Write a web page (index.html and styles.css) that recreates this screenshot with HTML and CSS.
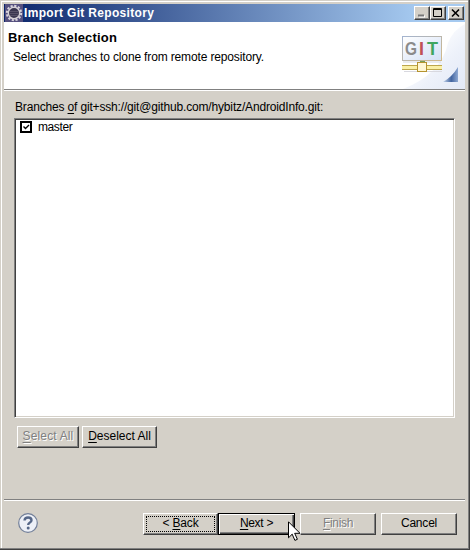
FILE: index.html
```
<!DOCTYPE html>
<html lang="en">
<head>
<meta charset="utf-8">
<title>Import Git Repository</title>
<link rel="stylesheet" href="styles.css">
</head>
<body>
<div class="window">
  <header class="titlebar">
    <svg class="app-icon" width="18" height="18" viewBox="0 0 18 18">
      <rect width="18" height="18" fill="#55507f"/>
      <circle cx="9" cy="9" r="7.2" fill="none" stroke="#d8d4dc" stroke-width="2" stroke-dasharray="2.2 1.57"/>
      <circle cx="9" cy="9" r="5.7" fill="#3a3650" stroke="#d5d0d6" stroke-width="1.4"/>
      <path d="M5 7.5h8M4.500 9.500h9M5 11.500h8" stroke="#575168"/>
    </svg>
    <span class="title">Import Git Repository</span>
    <div class="controls">
      <span class="control"><svg width="14" height="12"><path d="M4 9.500h6" stroke="#fff" stroke-width="2"/><path d="M3 8.500h6" stroke="#777" stroke-width="2"/></svg></span>
      <span class="control"><svg width="14" height="12"><path d="M2.500 1.500h8v8h-8zM2 2.500h9" fill="none" stroke="#000"/></svg></span>
      <span class="control close"><svg width="14" height="12"><path d="M3 2.500l7 7M10 2.500l-7 7" stroke="#000" stroke-width="1.600"/></svg></span>
    </div>
  </header>
  <section class="banner">
    <div class="banner-text">
      <h1 class="heading">Branch Selection</h1>
      <p class="description">Select branches to clone from remote repository.</p>
    </div>
    <svg class="banner-art" width="75" height="67" viewBox="390 22 75 67">
      <defs>
        <linearGradient id="sky" x1="0" y1="0" x2="1" y2="1"><stop offset=".3" stop-color="#fff"/><stop offset=".65" stop-color="#edf1fa"/><stop offset="1" stop-color="#e3e9f6"/></linearGradient>
        <linearGradient id="paper" x1="0" y1="0" x2="1" y2="1"><stop stop-color="#fff"/><stop offset="1" stop-color="#d3e0f6"/></linearGradient>
        <linearGradient id="frame" x1="0" y1="0" x2="1" y2="1"><stop stop-color="#a3b4d0"/><stop offset="1" stop-color="#d2b886"/></linearGradient>
        <linearGradient id="corner" x1="0" y1="0" x2="1" y2="0"><stop stop-color="#c8d8ee"/><stop offset=".55" stop-color="#42649f"/><stop offset="1" stop-color="#8fa9d2"/></linearGradient>
      </defs>
      <path d="M465 24v65h-62q38-15 45-46 5-13 17-19" fill="url(#sky)"/>
      <rect x="402.500" y="36.500" width="39" height="24" fill="url(#paper)" stroke="url(#frame)"/>
      <path d="M403 62h38" stroke="#d5d7dc"/>
      <g class="git"><text x="405" y="55" fill="#8b8b8b" textLength="12" lengthAdjust="spacingAndGlyphs">G</text><text x="419" y="55" fill="#c05058">I</text><text x="427" y="55" fill="#3fa660" textLength="11" lengthAdjust="spacingAndGlyphs">T</text></g>
      <path d="M402 65.500h40M402 69.500h40" stroke="#bda64c"/><path d="M402 67.500h40" stroke="#faf0a6" stroke-width="3"/>
      <path d="M404 71.500h38" stroke="#d8d8df"/>
      <rect x="417.500" y="62.500" width="9" height="9" fill="#fff7d5" stroke="#b5932f"/><path d="M420 61.500h5" stroke="#76a05a"/>
      <path d="M458 67v15h-15q9-5 15-15" fill="url(#corner)"/>
    </svg>
  </section>
  <main class="content">
    <label class="list-label">Branches <u>o</u>f git+ssh://git@github.com/hybitz/AndroidInfo.git:</label>
    <div class="list">
      <div class="row"><svg class="check" width="12" height="12"><rect x="1" y="1" width="10" height="10" fill="#fff" stroke="#000" stroke-width="2"/><path d="M3.500 5.500l2 2 3.500-3.500" fill="none" stroke="#000" stroke-width="1.400"/></svg><span class="item">master</span></div>
    </div>
    <div class="selection">
      <button class="button select disabled"><span><u>S</u>elect All</span></button>
      <button class="button deselect"><span><u>D</u>eselect All</span></button>
    </div>
  </main>
  <footer class="footer">
    <svg class="help" width="20" height="20" viewBox="0 0 20 20"><circle cx="10" cy="10" r="9.300" fill="#edf0f7" stroke="#727f99" stroke-width="1.200"/><path d="M6.500 7.500q.3-3 3.600-3 3.400 0 3.400 2.700 0 1.500-1.900 2.500-1.400.8-1.400 2.300" fill="none" stroke="#566788" stroke-width="2.400"/><circle cx="10.200" cy="15" r="1.500" fill="#566788"/></svg>
    <button class="button back"><span>&lt; <u>B</u>ack</span></button>
    <button class="button next"><span><u>N</u>ext &gt;</span></button>
    <button class="button finish disabled"><span><u>F</u>inish</span></button>
    <button class="button cancel"><span>Cancel</span></button>
  </footer>
  <svg class="cursor" width="13" height="22" viewBox="0 0 13 22"><path d="M.500.800v16l3.700-3.600 2.700 6.200 2.500-1.100-2.700-6H12z" fill="#fff" stroke="#000"/></svg>
</div>
</body>
</html>
```
FILE: styles.css
```
* { box-sizing: border-box; }
body { margin: 0; overflow: hidden; background: #d4d0c8; font: 12px/14px "Liberation Sans", Arial, sans-serif; color: #000; }
u { text-decoration: underline; text-underline-offset: 2px; text-decoration-thickness: 1px; text-decoration-skip-ink: none; }
.window { position: relative; display: flex; flex-direction: column; width: 470px; height: 550px; padding: 4px 5px 1px 4px; background: #d4d0c8; box-shadow: inset -1px -1px #404040, inset -2px -2px #808080, inset 1px 1px #d4d0c8, inset 2px 2px #fff; }
.titlebar { display: flex; align-items: center; flex: 0 0 18px; padding: 0 1px; background: linear-gradient(90deg, #0a246a, #a6caf0 90%); }
.app-icon { flex: none; }
.title { margin-left: 1px; color: #fff; font-weight: bold; letter-spacing: .33px; white-space: nowrap; }
.controls { display: flex; margin-left: auto; }
.control { width: 16px; height: 14px; background: #d4d0c8; border: 1px solid; border-color: #fff #404040 #404040 #fff; box-shadow: inset -1px -1px #808080; }
.control svg { display: block; }
.close { margin-left: 2px; }
.banner { display: flex; justify-content: space-between; flex: 0 0 67px; background: #fff; }
.heading { margin: 9px 0 0 4px; font: bold 13px/14px "Liberation Sans", Arial, sans-serif; letter-spacing: .18px; white-space: nowrap; }
.description { margin: 5px 0 0 9px; letter-spacing: -.145px; white-space: nowrap; }
.git { font: bold 18px "Liberation Sans", Arial, sans-serif; }
.content { flex: 1; padding: 10px 10px 0; border-top: 1px solid #808080; box-shadow: inset 0 1px #fff; }
.list-label { display: block; letter-spacing: -.165px; padding-left: 1px; white-space: nowrap; }
.list { height: 300px; margin-top: 4px; padding: 1px 5px; background: #fff; border: 1px solid; border-color: #808080 #fff #fff #808080; box-shadow: inset 1px 1px #404040, inset -1px -1px #d4d0c8; }
.row { display: flex; align-items: center; height: 14px; }
.item { margin-left: 6px; letter-spacing: -.4px; }
.selection { display: flex; gap: 3px; margin: 8px 0 0 3px; }
.button { display: flex; align-items: center; justify-content: center; height: 22px; padding: 0 0 2px; background: #d4d0c8; border: 1px solid; border-color: #fff #404040 #404040 #fff; box-shadow: inset -1px -1px #808080; font: inherit; color: #000; white-space: nowrap; }
.disabled { color: #808080; text-shadow: 1px 1px #fff; }
.select { width: 62px; letter-spacing: .15px; }
.deselect { width: 75px; }
.footer { display: flex; align-items: flex-start; flex: 0 0 50px; padding: 13px 8px 0 14px; border-top: 1px solid #808080; box-shadow: inset 0 1px #fff; }
.back { width: 75px; margin-left: 105px; outline: 1px dotted #000; outline-offset: -4px; letter-spacing: -.15px; }
.next { width: 77px; border: 1px solid #000; box-shadow: inset 1px 1px #fff, inset -1px -1px #404040, inset -2px -2px #808080; letter-spacing: -.3px; }
.finish { width: 76px; margin-left: 5px; letter-spacing: -.3px; }
.cancel { width: 76px; margin-left: 5px; letter-spacing: -.2px; }
.cursor { position: absolute; left: 288px; top: 521px; }
```
